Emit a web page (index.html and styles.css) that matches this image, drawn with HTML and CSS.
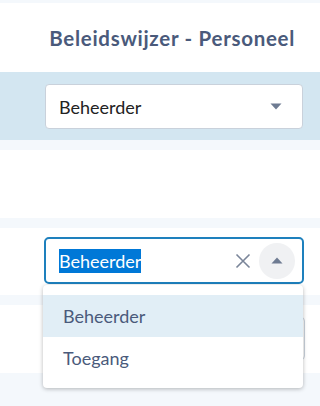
FILE: index.html
```html
<!DOCTYPE html>
<html>
<head>
<meta charset="utf-8">
<link rel="stylesheet" href="styles.css">
</head>
<body>
<div class="page">
  <div class="strip strip-top"></div>
  <div class="row header">
    <h1 class="title">Beleidswijzer - Personeel</h1>
  </div>
  <div class="row row-blue">
    <div class="select">
      <span class="value">Beheerder</span>
      <span class="caret">
        <svg width="12" height="7" viewBox="0 0 12 7"><path d="M0.5 0.5 H11.5 L6 6.5 Z" fill="#6e7b92"/></svg>
      </span>
    </div>
  </div>
  <div class="strip"></div>
  <div class="row"></div>
  <div class="strip"></div>
  <div class="row row-focus">
    <div class="select select-focus">
      <span class="value"><span class="selected-text">Beheerder</span></span>
      <span class="clear">
        <svg width="16" height="16" viewBox="0 0 16 16"><path d="M1.5 1.5 L14.5 14.5 M14.5 1.5 L1.5 14.5" stroke="#7a8599" stroke-width="1.6" fill="none"/></svg>
      </span>
      <span class="caret-btn">
        <svg width="12" height="7" viewBox="0 0 12 7"><path d="M0.5 6.5 H11.5 L6 0.5 Z" fill="#6e7b92"/></svg>
      </span>
    </div>
    <div class="menu">
      <div class="option option-active">Beheerder</div>
      <div class="option">Toegang</div>
    </div>
  </div>
  <div class="strip"></div>
  <div class="row row-last">
    <div class="select select-hidden"></div>
  </div>
  <div class="strip strip-bottom"></div>
</div>
</body>
</html>
```

FILE: styles.css
```css
html, body {
  margin: 0;
  padding: 0;
  background: #ffffff;
}
body {
  width: 320px;
  height: 406px;
  overflow: hidden;
  font-family: "Lato", "Noto Sans", sans-serif;
}
.page {
  display: flex;
  flex-direction: column;
}
.strip {
  height: 10px;
  background: #f4f8fc;
}
.strip-top {
  height: 3px;
}
.strip-bottom {
  height: 40px;
}
.row {
  height: 68px;
  background: #ffffff;
  display: flex;
  align-items: flex-start;
}
.header {
  height: 69px;
  justify-content: flex-end;
  align-items: center;
}
.title {
  margin: 0 25px 0 0;
  font-size: 20.5px;
  font-weight: 700;
  letter-spacing: 0.7px;
  color: #4a5a7b;
}
.row-blue {
  background: #d3e6f1;
  padding-top: 12px;
  box-sizing: border-box;
}
.select {
  margin-left: 45px;
  width: 258px;
  height: 45px;
  box-sizing: border-box;
  border: 1px solid #c9d1db;
  border-radius: 4px;
  background: #ffffff;
  display: flex;
  align-items: center;
  padding-left: 13px;
  padding-right: 20px;
}
.value {
  flex: 1;
  font-size: 18px;
  color: #222222;
}
.caret {
  display: flex;
}
.row-focus {
  height: 67px;
  padding-top: 9px;
  box-sizing: border-box;
  position: relative;
}
.select-focus {
  margin-left: 44px;
  width: 260px;
  height: 47px;
  border: 2px solid #1e80bd;
  border-radius: 5px;
  padding-left: 13px;
  padding-right: 7px;
}
.selected-text {
  background: #0078d7;
  color: #ffffff;
  padding: 1px 0;
}
.clear {
  display: flex;
  margin-right: 8px;
}
.caret-btn {
  width: 36px;
  height: 36px;
  border-radius: 50%;
  background: #f0f1f3;
  display: flex;
  align-items: center;
  justify-content: center;
}
.menu {
  position: absolute;
  left: 43px;
  top: 57px;
  width: 260px;
  height: 103px;
  box-sizing: border-box;
  padding-top: 10px;
  background: #ffffff;
  border-radius: 4px;
  box-shadow: 0 1px 4px rgba(0, 0, 0, 0.28);
  z-index: 2;
}
.option {
  height: 42px;
  display: flex;
  align-items: center;
  padding-left: 20px;
  font-size: 18px;
  color: #4a5a7b;
}
.option-active {
  background: #e1eef6;
}
.row-last {
  padding-top: 12px;
  box-sizing: border-box;
}
.select-hidden {
  height: 43px;
  width: 260px;
}
```
